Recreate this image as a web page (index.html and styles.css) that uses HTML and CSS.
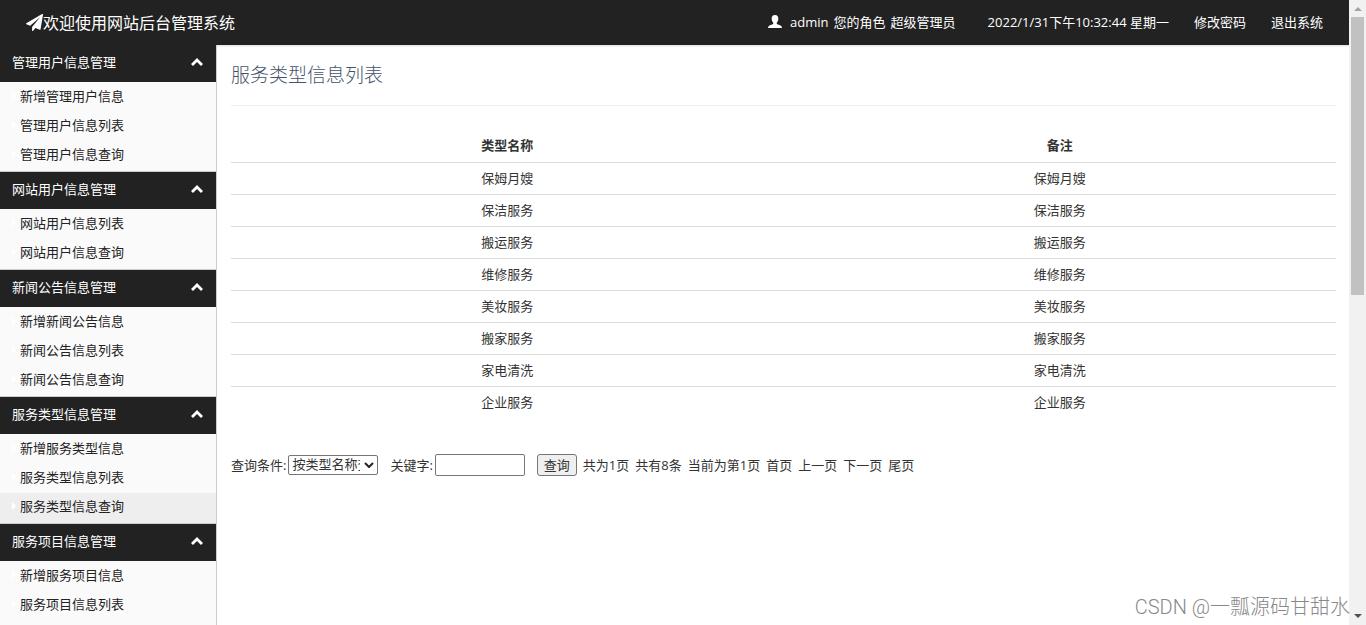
FILE: index.html
```html
<!DOCTYPE html>
<html lang="zh-CN">
<head>
<meta charset="utf-8">
<title>网站后台管理系统</title>
<link rel="stylesheet" href="styles.css">
</head>
<body>
<svg class="defs" aria-hidden="true">
  <symbol id="chevron" viewBox="0 0 12 8"><path d="M6 0 12 6 10 8 6 4 2 8 0 6Z"/></symbol>
  <symbol id="marker" viewBox="0 0 4 8"><path d="M0 0 4 4 0 8Z"/></symbol>
</svg>
<div class="page">
  <header class="topbar">
    <a class="brand" href="#"><svg class="plane" viewBox="0 0 1792 1792" aria-hidden="true"><path d="M1764 11q33 24 27 64l-256 1536q-5 29-32 45-14 8-31 8-11 0-24-5l-453-185-242 295q-18 23-49 23-13 0-22-4-19-7-30.500-23.500T640 1728v-349l864-1059-1069 925-395-162q-37-14-40-55-2-40 32-59L1696 9q15-9 32-9 20 0 36 11z"/></svg>欢迎使用网站后台管理系统</a>
    <nav class="account">
      <span class="user"><svg class="person" viewBox="0 0 14 13" aria-hidden="true"><path d="M7 0C9.300 0 10.500 1.500 10.300 4 10.200 5.700 9.500 6.900 8.800 7.600V9L12.500 10.600Q14 11.200 14 13H0Q0 11.200 1.500 10.600L5.200 9V7.600C4.500 6.900 3.800 5.700 3.700 4 3.500 1.500 4.700 0 7 0Z"/></svg><span>admin</span><span>您的角色</span><span>超级管理员</span></span>
      <time>2022/1/31下午10:32:44 星期一</time>
      <a href="#">修改密码</a>
      <a href="#">退出系统</a>
    </nav>
  </header>
  <nav class="sidebar">
    <section class="group">
      <button class="head" type="button">管理用户信息管理<svg class="chevron"><use href="#chevron"/></svg></button>
      <ul class="items">
        <li><a href="#"><svg class="marker"><use href="#marker"/></svg>新增管理用户信息</a></li>
        <li><a href="#"><svg class="marker"><use href="#marker"/></svg>管理用户信息列表</a></li>
        <li><a href="#"><svg class="marker"><use href="#marker"/></svg>管理用户信息查询</a></li>
      </ul>
    </section>
    <section class="group">
      <button class="head" type="button">网站用户信息管理<svg class="chevron"><use href="#chevron"/></svg></button>
      <ul class="items">
        <li><a href="#"><svg class="marker"><use href="#marker"/></svg>网站用户信息列表</a></li>
        <li><a href="#"><svg class="marker"><use href="#marker"/></svg>网站用户信息查询</a></li>
      </ul>
    </section>
    <section class="group">
      <button class="head" type="button">新闻公告信息管理<svg class="chevron"><use href="#chevron"/></svg></button>
      <ul class="items">
        <li><a href="#"><svg class="marker"><use href="#marker"/></svg>新增新闻公告信息</a></li>
        <li><a href="#"><svg class="marker"><use href="#marker"/></svg>新闻公告信息列表</a></li>
        <li><a href="#"><svg class="marker"><use href="#marker"/></svg>新闻公告信息查询</a></li>
      </ul>
    </section>
    <section class="group">
      <button class="head" type="button">服务类型信息管理<svg class="chevron"><use href="#chevron"/></svg></button>
      <ul class="items">
        <li><a href="#"><svg class="marker"><use href="#marker"/></svg>新增服务类型信息</a></li>
        <li><a href="#"><svg class="marker"><use href="#marker"/></svg>服务类型信息列表</a></li>
        <li class="active"><a href="#"><svg class="marker"><use href="#marker"/></svg>服务类型信息查询</a></li>
      </ul>
    </section>
    <section class="group last">
      <button class="head" type="button">服务项目信息管理<svg class="chevron"><use href="#chevron"/></svg></button>
      <ul class="items">
        <li><a href="#"><svg class="marker"><use href="#marker"/></svg>新增服务项目信息</a></li>
        <li><a href="#"><svg class="marker"><use href="#marker"/></svg>服务项目信息列表</a></li>
      </ul>
    </section>
  </nav>
  <main class="content">
    <h1 class="title">服务类型信息列表</h1>
    <table class="list">
      <thead><tr><th>类型名称</th><th>备注</th></tr></thead>
      <tbody>
        <tr><td>保姆月嫂</td><td>保姆月嫂</td></tr>
        <tr><td>保洁服务</td><td>保洁服务</td></tr>
        <tr><td>搬运服务</td><td>搬运服务</td></tr>
        <tr><td>维修服务</td><td>维修服务</td></tr>
        <tr><td>美妆服务</td><td>美妆服务</td></tr>
        <tr><td>搬家服务</td><td>搬家服务</td></tr>
        <tr><td>家电清洗</td><td>家电清洗</td></tr>
        <tr><td>企业服务</td><td>企业服务</td></tr>
      </tbody>
    </table>
    <form class="search">
      <div class="field"><label for="cond">查询条件:</label><span class="select"><select id="cond"><option>按类型名称查询</option></select><svg class="caret" viewBox="0 0 10 6" aria-hidden="true"><path d="M1 1 5 5 9 1"/></svg></span></div>
      <div class="field"><label for="key">关键字:</label><input id="key" type="text"></div>
      <div class="pager">
        <button type="button">查询</button>
        <span>共为1页</span><span>共有8条</span><span>当前为第1页</span>
        <a href="#">首页</a><a href="#">上一页</a><a href="#">下一页</a><a href="#">尾页</a>
      </div>
    </form>
  </main>
  <div class="scrollbar" aria-hidden="true">
    <svg class="arrow up" viewBox="0 0 8 4"><path d="M4 0 8 4H0Z"/></svg>
    <div class="track"><div class="thumb"></div></div>
    <svg class="arrow down" viewBox="0 0 8 4"><path d="M0 0H8L4 4Z"/></svg>
  </div>
  <div class="watermark">CSDN @一瓢源码甘甜水</div>
</div>
</body>
</html>
```
FILE: styles.css
```css
* { box-sizing: border-box; }
body {
  margin: 0;
  background: #fff;
  color: #333;
  font: 13px/20px "Open Sans", "Noto Sans CJK SC", sans-serif;
}
a { color: inherit; text-decoration: none; }
button, input, select { font: inherit; color: inherit; }
svg { fill: currentColor; flex: none; }
.defs { display: none; }

.page {
  position: relative;
  display: grid;
  grid-template: 45px minmax(0, 1fr) / 217px minmax(0, 1fr) 17px;
  height: 100vh;
  overflow: hidden;
}

.topbar {
  grid-column: 1 / 3;
  display: flex;
  justify-content: space-between;
  align-items: center;
  padding: 0 26px;
  background: #222;
  color: #fff;
  box-shadow: 0 1px 2px #ddd;
}
.brand { display: flex; align-items: center; font-size: 16px; }
.plane { width: 17px; height: 17px; }
.account { display: flex; gap: 25px; padding-bottom: 2px; }
.user { display: flex; align-items: center; gap: 5px; padding-right: 7px; }
.person { width: 14px; height: 13px; margin-right: 3px; }

.sidebar {
  border-right: 1px solid #ccc;
  background: #fafafa;
  color: #222;
  overflow: hidden;
  z-index: 1;
}
.group { border-bottom: 1px solid #ccc; }
.group.last { border-bottom: 0; }
.head {
  display: flex;
  justify-content: space-between;
  align-items: center;
  width: 100%;
  height: 37px;
  padding: 0 13px 3px 12px;
  border: 0;
  background: #222;
  color: #fff;
}
.chevron { width: 12px; height: 8px; }
.items { margin: 0; padding: 1px 0 0; list-style: none; }
.items li { height: 29px; }
.items li:last-child { height: 30px; }
.items a { display: flex; align-items: center; gap: 4px; height: 29px; padding: 0 0 3px 12px; }
.items .active { background: #eee; }
.marker { width: 4px; height: 8px; color: #fff; }

.content { padding: 15px 13px 0 14px; }
.title {
  margin: 0 0 24px;
  padding-bottom: 15px;
  border-bottom: 1px solid #eee;
  color: #44546a;
  font-size: 19px;
  font-weight: 300;
  line-height: 30px;
}
.list { width: 100%; border-collapse: collapse; table-layout: fixed; text-align: center; }
.list th, .list td { height: 32px; padding: 0 0 1px; border-bottom: 1px solid #ddd; }
.list tr:last-child td { border-bottom: 0; }
.list thead th { border-bottom: 1px solid #ddd; }

.search { display: flex; align-items: center; gap: 12px; margin-top: 36px; }
.field { display: flex; align-items: center; gap: 2px; }
.select { display: grid; align-items: center; }
.search select {
  grid-area: 1 / 1;
  appearance: none;
  width: 90px;
  height: 20px;
  padding: 0 17px 2px 3px;
  border: 1px solid #767676;
  border-radius: 2px;
  background: #fff;
  line-height: 16px;
  text-overflow: clip;
}
.caret {
  grid-area: 1 / 1;
  justify-self: end;
  width: 10px;
  height: 6px;
  margin-right: 4px;
  fill: none;
  stroke: #222;
  stroke-width: 2;
  pointer-events: none;
}
.search input { width: 90px; height: 22px; border: 1px solid #767676; border-radius: 2px; }
.search button { width: 40px; height: 22px; padding: 0; border: 1px solid #767676; border-radius: 3px; background: #efefef; line-height: 20px; }
.pager { display: flex; align-items: center; gap: 6px; }

.scrollbar {
  grid-area: 1 / 3 / 3 / 4;
  display: flex;
  flex-direction: column;
  align-items: center;
  background: #f1f1f1;
}
.arrow { width: 8px; height: 4px; }
.up { margin: 7px 0 6px; color: #a3a3a3; }
.down { margin: 6px 0 7px; color: #505050; }
.track { flex: 1; width: 13px; }
.thumb { height: 47%; background: #c1c1c1; }

.watermark {
  position: absolute;
  right: 16px;
  bottom: 3px;
  color: #888;
  font: 300 20px/30px Roboto, "Noto Sans CJK SC", sans-serif;
}
```
